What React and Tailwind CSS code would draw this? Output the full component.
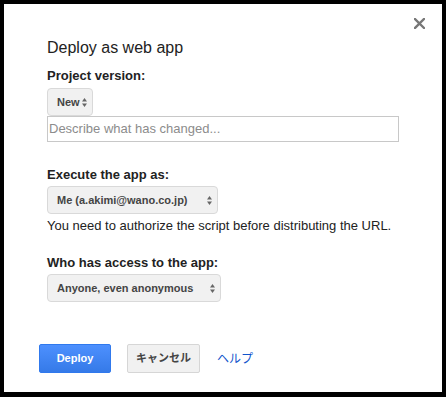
import React from 'react'

const font = "font-['Liberation_Sans','Noto_Sans_CJK_JP',Arial,sans-serif]"

const Arrows = () => (
  <svg width="5" height="9" viewBox="0 0 5 9" className="shrink-0">
    <path d="M2.5 0 L5 3.5 L0 3.5 Z" fill="#666" />
    <path d="M0 5.5 L5 5.5 L2.5 9 Z" fill="#666" />
  </svg>
)

const FakeSelect = ({ label, width }) => (
  <div
    className={`flex items-center justify-between h-[28px] pl-[9px] pr-[5px] rounded-[4px] border border-[#d9d9d9] bg-[#f1f1f1] text-[11px] font-bold text-[#444] ${width}`}
  >
    <span className="leading-none">{label}</span>
    <Arrows />
  </div>
)

const Label = ({ children, className = '' }) => (
  <div className={`text-[13px] leading-[16px] font-bold text-[#222] ${className}`}>{children}</div>
)

export default function App() {
  return (
    <div className={`w-[446px] h-[397px] bg-black pt-[4px] pl-[4px] pr-[4px] pb-[5px] ${font}`}>
      <div className="relative h-full bg-white pt-[34px] pl-[35px]">
        {/* close */}
        <button className="absolute top-[13px] right-[17px] w-[12px] h-[12px] flex items-center justify-center">
          <svg width="11" height="11" viewBox="0 0 11 11">
            <path d="M1 1 L10 10 M10 1 L1 10" stroke="#777" strokeWidth="2.4" strokeLinecap="square" />
          </svg>
        </button>

        <div className="pl-[8px]">
          <h1 className="text-[16px] leading-[20px] text-[#222]">Deploy as web app</h1>

          <Label className="mt-[10px]">Project version:</Label>
          <div className="mt-[4px] flex">
            <FakeSelect label="New" width="w-[46px]" />
          </div>
          <div className="w-[352px] h-[26px] border border-[#c8c8c8] flex items-center pl-[1px] text-[13px] text-[#8c8c8c]">
            Describe what has changed...
          </div>

          <Label className="mt-[25px]">Execute the app as:</Label>
          <div className="mt-[3px] flex">
            <FakeSelect label="Me (a.akimi@wano.co.jp)" width="w-[171px]" />
          </div>
          <p className="mt-[4px] text-[13px] leading-[16px] text-[#222]">
            You need to authorize the script before distributing the URL.
          </p>

          <Label className="mt-[21px]">Who has access to the app:</Label>
          <div className="mt-[3px] flex">
            <FakeSelect label="Anyone, even anonymous" width="w-[174px]" />
          </div>
        </div>

        <div className="mt-[42px] flex items-center">
          <button className="w-[72px] h-[29px] rounded-[2px] border border-[#3079ed] bg-gradient-to-b from-[#4d90fe] to-[#357ae8] text-white text-[11px] font-bold">
            Deploy
          </button>
          <button className="ml-[16px] w-[73px] h-[29px] rounded-[2px] border border-[#d6d6d6] bg-[#f1f1f1] text-[#444] text-[11px] font-bold">
            キャンセル
          </button>
          <a className="ml-[17px] text-[12px] text-[#1155cc] cursor-pointer">ヘルプ</a>
        </div>
      </div>
    </div>
  )
}
